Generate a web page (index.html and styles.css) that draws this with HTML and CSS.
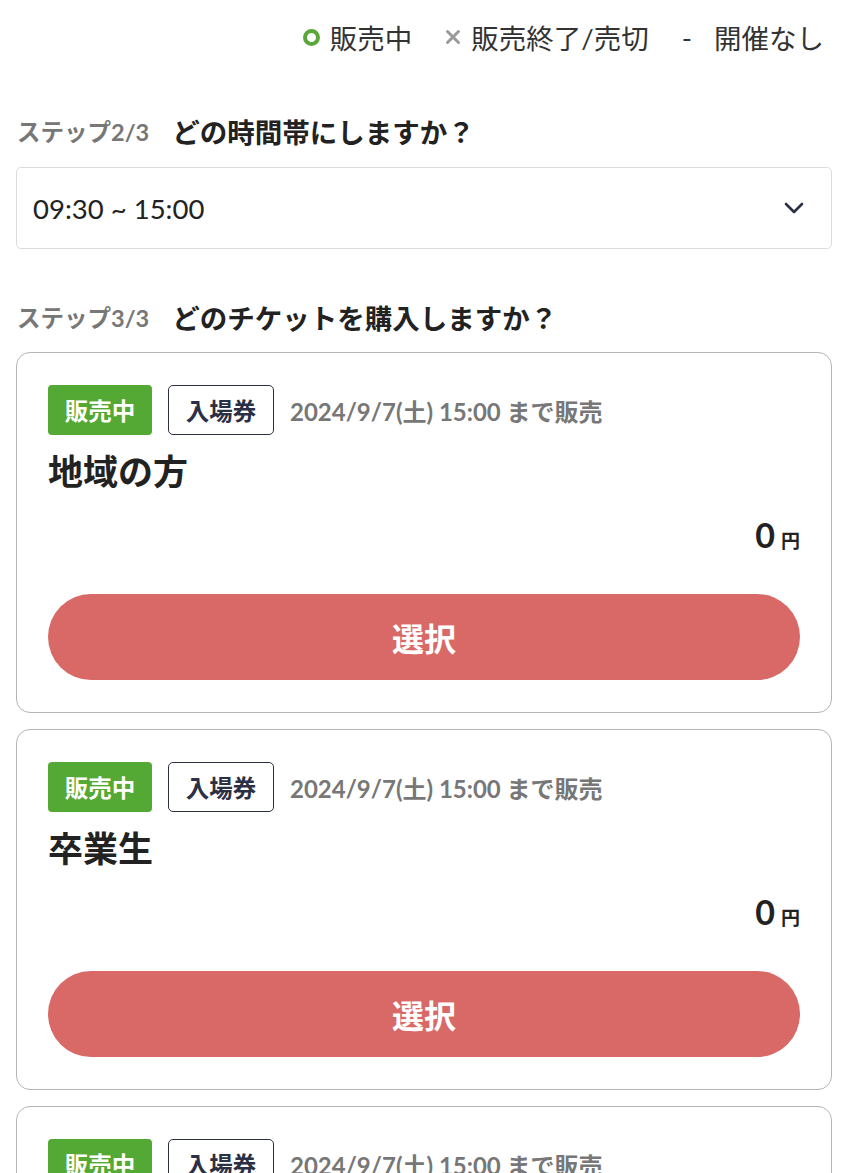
FILE: index.html
```html
<!DOCTYPE html>
<html lang="ja">
<head>
<meta charset="utf-8">
<link rel="stylesheet" href="styles.css">
</head>
<body>
<div class="page">
  <div class="legend">
    <span class="legend-item"><span class="ring"></span>販売中</span>
    <span class="legend-item"><svg class="cross" width="16" height="16" viewBox="0 0 16 16"><path d="M2.5 2.5 L13.5 13.5 M13.5 2.5 L2.5 13.5" stroke="#9a9a9a" stroke-width="3" stroke-linecap="round"/></svg>販売終了/売切</span>
    <span class="legend-item"><span class="dash">-</span>開催なし</span>
  </div>

  <div class="step">
    <span class="step-num">ステップ2/3</span>
    <span class="step-title">どの時間帯にしますか？</span>
  </div>
  <div class="select">
    <span>09:30 ~ 15:00</span>
    <svg class="chev" width="22" height="14" viewBox="0 0 22 14"><path d="M3 3 L11 11 L19 3" fill="none" stroke="#2b3045" stroke-width="2.6" stroke-linecap="round" stroke-linejoin="round"/></svg>
  </div>

  <div class="step step3">
    <span class="step-num">ステップ3/3</span>
    <span class="step-title">どのチケットを購入しますか？</span>
  </div>

  <div class="cards">
    <div class="card">
      <div class="meta">
        <span class="badge on">販売中</span>
        <span class="badge type">入場券</span>
        <span class="until">2024/9/7(土) 15:00 まで販売</span>
      </div>
      <div class="name">地域の方</div>
      <div class="price"><span class="num">0</span><span class="yen">円</span></div>
      <button class="btn">選択</button>
    </div>
    <div class="card">
      <div class="meta">
        <span class="badge on">販売中</span>
        <span class="badge type">入場券</span>
        <span class="until">2024/9/7(土) 15:00 まで販売</span>
      </div>
      <div class="name">卒業生</div>
      <div class="price"><span class="num">0</span><span class="yen">円</span></div>
      <button class="btn">選択</button>
    </div>
    <div class="card">
      <div class="meta">
        <span class="badge on">販売中</span>
        <span class="badge type">入場券</span>
        <span class="until">2024/9/7(土) 15:00 まで販売</span>
      </div>
      <div class="name">在校生の家族</div>
      <div class="price"><span class="num">0</span><span class="yen">円</span></div>
      <button class="btn">選択</button>
    </div>
  </div>
</div>
</body>
</html>
```
FILE: styles.css
```css
* { box-sizing: border-box; }
html, body { margin: 0; padding: 0; background: #fff; }
body {
  font-family: Lato, "Noto Sans CJK JP", sans-serif;
  color: #222;
}
.page {
  padding: 0 16px;
  overflow: hidden;
  height: 1173px;
}
.legend {
  display: flex;
  justify-content: flex-end;
  align-items: center;
  gap: 33px;
  height: 74px;
  padding-right: 8px;
  font-size: 27.5px;
  color: #333;
}
.legend-item { display: flex; align-items: center; gap: 10px; }
.ring {
  width: 17px; height: 17px;
  border: 4px solid #5aa83a;
  border-radius: 50%;
  display: inline-block;
}
.dash { margin-right: 12px; }

.step {
  display: flex;
  align-items: center;
  gap: 23px;
  margin-top: 37px;
  height: 40px;
}
.step-num { font-size: 23.5px; font-weight: 700; color: #777; padding-left: 1px; }
.step-title { font-size: 27.5px; font-weight: 700; color: #222; }
.select {
  margin-top: 16px;
  height: 82px;
  border: 1px solid #dcdcdc;
  border-radius: 5px;
  display: flex;
  align-items: center;
  justify-content: space-between;
  padding: 0 26px 0 16px;
  font-size: 27.5px;
  color: #222;
}
.step3 { margin-top: 48px; }
.cards { display: flex; flex-direction: column; gap: 16px; margin-top: 15px; }
.card {
  border: 1.5px solid #b5b5b5;
  border-radius: 14px;
  padding: 32px 31px 32px 31px;
  display: flex;
  flex-direction: column;
}
.meta { display: flex; align-items: center; gap: 16px; height: 50px; }
.badge {
  height: 50px;
  display: inline-flex;
  align-items: center;
  justify-content: center;
  font-size: 23.5px;
  font-weight: 700;
  border-radius: 4px;
}
.badge.on { background: #53a934; color: #fff; width: 104px; }
.badge.type { border: 1.5px solid #2b3045; color: #2b3045; width: 106px; border-radius: 5px; }
.until { font-size: 24px; font-weight: 700; color: #777; }
.name {
  font-size: 35px; font-weight: 700; color: #222;
  margin-top: 10px; height: 48px;
  display: flex; align-items: center;
}
.price {
  display: flex; justify-content: flex-end; align-items: baseline;
  margin-top: 22px; height: 40px;
}
.price .num { font-size: 34px; font-weight: 700; line-height: 40px; }
.price .yen { font-size: 19px; font-weight: 700; margin-left: 6px; line-height: 40px; }
.btn {
  margin-top: 39px;
  height: 86px;
  flex-shrink: 0;
  border: none;
  border-radius: 43px;
  background: #d96967;
  color: #fff;
  font-family: inherit;
  font-size: 32px;
  font-weight: 700;
  width: 100%;
}
```
